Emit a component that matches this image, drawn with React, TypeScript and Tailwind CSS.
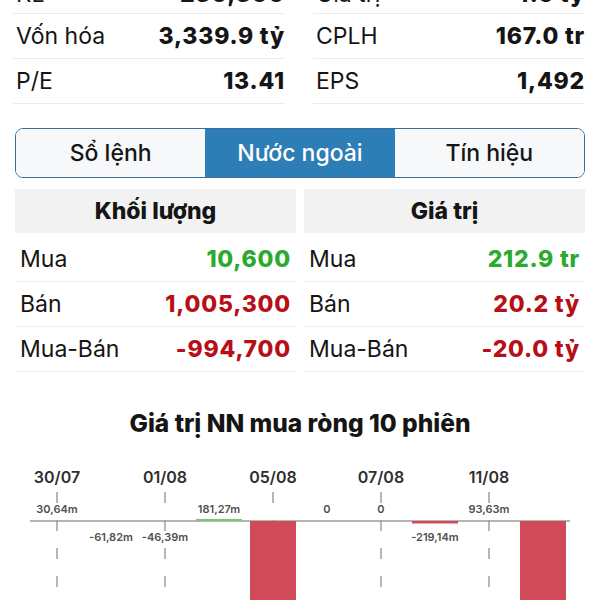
import React from "react";

const font = { fontFamily: "Inter, 'Noto Sans', sans-serif" };

function StatRow({ label, value, first }: { label: string; value: string; first?: boolean }) {
  return (
    <div
      className={`flex items-center justify-between border-b border-[#ececec] pl-[3px] ${
        first ? "h-[38px]" : "h-[45px]"
      }`}
    >
      <span className="text-[23px] text-[#151515]">{label}</span>
      <span className="text-[23px] font-extrabold tracking-[0.8px] text-[#151515]">{value}</span>
    </div>
  );
}

function DataRow({ label, value, color }: { label: string; value: string; color: string }) {
  return (
    <div className="flex h-[45px] items-center justify-between border-b border-[#efefef] pl-[5px] pr-[5px]">
      <span className="text-[23px] text-[#151515]">{label}</span>
      <span className={`text-[23px] font-extrabold tracking-[0.8px] ${color}`}>{value}</span>
    </div>
  );
}

const bars = [
  { v: 30.64, label: "30,64m" },
  { v: -61.82, label: "-61,82m" },
  { v: -46.39, label: "-46,39m" },
  { v: 181.27, label: "181,27m" },
  { v: -12000, label: "" },
  { v: 0, label: "0" },
  { v: 0, label: "0" },
  { v: -219.14, label: "-219,14m" },
  { v: 93.63, label: "93,63m" },
  { v: -12000, label: "" },
];

const dates = ["30/07", "01/08", "05/08", "07/08", "11/08"];

function Chart() {
  const axisY = 71;
  const scale = 0.0114;
  return (
    <svg width="600" height="170" viewBox="0 0 600 170" className="block">
      {dates.map((d, i) => {
        const x = 57 + 108 * i;
        return (
          <g key={d}>
            <text
              x={x}
              y={33}
              textAnchor="middle"
              fontSize="16"
              fontWeight="600"
              fill="#2e2e2e"
              style={font}
            >
              {d}
            </text>
            <line
              x1={x}
              x2={x}
              y1={42}
              y2={170}
              stroke="#a0a0a0"
              strokeWidth="1.5"
              strokeDasharray="11 17"
            />
          </g>
        );
      })}
      <line x1={30} x2={570} y1={axisY} y2={axisY} stroke="#9c9c9c" strokeWidth="1.5" />
      {bars.map((b, i) => {
        const cx = 57 + 54 * i;
        const h = Math.abs(b.v) * scale;
        const pos = b.v >= 0;
        return (
          <g key={i}>
            {Math.abs(b.v) > 150 && (
              <rect
                x={cx - 23}
                y={pos ? axisY - h : axisY}
                width={46}
                height={h}
                fill={pos ? "#7cc67a" : "#d04a58"}
              />
            )}
            {b.label && (
              <text
                x={cx}
                y={pos ? 63 : 91}
                textAnchor="middle"
                fontSize="11"
                fontWeight="600"
                fill="#505050"
                style={font}
              >
                {b.label}
              </text>
            )}
          </g>
        );
      })}
    </svg>
  );
}

export default function App() {
  return (
    <div className="h-[600px] w-[600px] overflow-hidden bg-white" style={font}>
      <div className="-mt-[24px]">
        <div className="grid grid-cols-2 gap-x-[28px] pl-[13px] pr-[15px]">
          <div>
            <StatRow first label="KL" value="230,300" />
            <StatRow label="Vốn hóa" value="3,339.9 tỷ" />
            <StatRow label="P/E" value="13.41" />
          </div>
          <div>
            <StatRow first label="Giá trị" value="4.6 tỷ" />
            <StatRow label="CPLH" value="167.0 tr" />
            <StatRow label="EPS" value="1,492" />
          </div>
        </div>

        <div className="mx-[15px] mt-[24px] flex h-[50px] overflow-hidden rounded-[8px] border-[1.5px] border-[#3b6f99]">
          <div className="flex flex-1 items-center justify-center bg-[#f7f8fa] text-[23px] font-medium text-[#151515]">
            Sổ lệnh
          </div>
          <div className="flex flex-1 items-center justify-center bg-[#2d7db6] text-[23px] font-medium text-white">
            Nước ngoài
          </div>
          <div className="flex flex-1 items-center justify-center bg-[#f7f8fa] text-[23px] font-medium text-[#151515]">
            Tín hiệu
          </div>
        </div>

        <div className="mt-[11px] grid grid-cols-2 gap-x-[8px] px-[15px]">
          <div>
            <div className="flex h-[44px] items-center justify-center bg-[#f2f2f2] text-[23px] font-extrabold text-[#151515]">
              Khối lượng
            </div>
            <div className="mt-[4px]">
              <DataRow label="Mua" value="10,600" color="text-[#2aaa2e]" />
              <DataRow label="Bán" value="1,005,300" color="text-[#b80f17]" />
              <DataRow label="Mua-Bán" value="-994,700" color="text-[#b80f17]" />
            </div>
          </div>
          <div>
            <div className="flex h-[44px] items-center justify-center bg-[#f2f2f2] text-[23px] font-extrabold text-[#151515]">
              Giá trị
            </div>
            <div className="mt-[4px]">
              <DataRow label="Mua" value="212.9 tr" color="text-[#2aaa2e]" />
              <DataRow label="Bán" value="20.2 tỷ" color="text-[#b80f17]" />
              <DataRow label="Mua-Bán" value="-20.0 tỷ" color="text-[#b80f17]" />
            </div>
          </div>
        </div>

        <div className="mt-[37px] text-center text-[24.5px] font-extrabold leading-[28px] text-[#151515]">
          Giá trị NN mua ròng 10 phiên
        </div>

        <div className="mt-[13px]">
          <Chart />
        </div>
      </div>
    </div>
  );
}
